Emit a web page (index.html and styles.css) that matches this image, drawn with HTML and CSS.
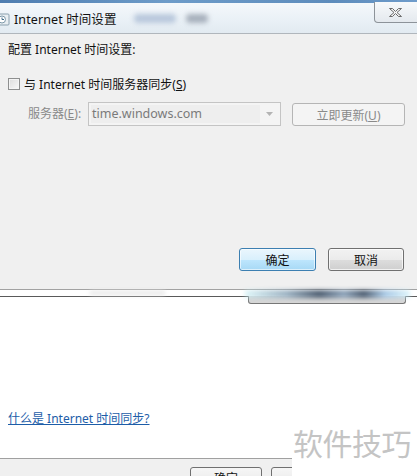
FILE: index.html
```html
<!DOCTYPE html>
<html lang="zh-CN">
<head>
<meta charset="utf-8">
<title>Internet 时间设置</title>
<link rel="stylesheet" href="styles.css">
</head>
<body>
<div class="page">
  <div class="dialog">
    <div class="frame-top"></div>
    <div class="titlebar">
      <svg class="app-icon" width="11" height="16" viewBox="0 0 11 16">
        <rect x="-4" y="3" width="13" height="11" rx="1" fill="#e8eef2" stroke="#8aa0ae"/>
        <circle cx="2" cy="8.5" r="3.5" fill="#fff" stroke="#7b97a8"/>
        <path d="M2 6.5V8.5H4" stroke="#3c6a88" fill="none"/>
      </svg>
      <span class="title">Internet 时间设置</span>
      <span class="ghost ghost-a"></span>
      <span class="ghost ghost-b"></span>
      <div class="close">
        <svg width="17" height="11" viewBox="0 0 17 11">
          <path d="M2.5 1.5h3l3 3 3-3h3l-4.5 4 4.5 4h-3l-3-3-3 3h-3l4.5-4z" fill="#f4f4f4" stroke="#6b6b6b" stroke-width="1" stroke-linejoin="round"/>
        </svg>
      </div>
    </div>
    <div class="content">
      <div class="heading">配置 Internet 时间设置:</div>
      <label class="sync-row">
        <span class="checkbox"></span>
        <span>与 Internet 时间服务器同步(<u>S</u>)</span>
      </label>
      <div class="server-row">
        <span class="server-label">服务器(<u>E</u>):</span>
        <div class="combo">
          <span class="combo-text">time.windows.com</span>
          <span class="combo-arrow">
            <svg width="7" height="4" viewBox="0 0 7 4"><path d="M0 0h7L3.5 4z" fill="#b4b4b4"/></svg>
          </span>
        </div>
        <button class="btn btn-update" type="button">立即更新(<u>U</u>)</button>
      </div>
      <div class="actions">
        <button class="btn btn-ok" type="button">确定</button>
        <button class="btn btn-cancel" type="button">取消</button>
      </div>
    </div>
  </div>
  <div class="seam">
    <div class="seam-glow"></div>
    <div class="behind-glow"></div>
    <div class="behind-tab"></div>
  </div>
  <div class="lower">
    <a class="help-link" href="#">什么是 Internet 时间同步?</a>
  </div>
  <div class="footer">
    <span class="fbtn fbtn-ok">确定</span>
    <span class="fbtn fbtn-cancel">取消</span>
  </div>
  <div class="watermark">软件技巧</div>
</div>
</body>
</html>
```

FILE: styles.css
```css
* { box-sizing: border-box; }

html, body {
  margin: 0;
  padding: 0;
  background: #ffffff;
}

body {
  font-family: "Segoe UI", "Noto Sans", "Noto Sans CJK SC", sans-serif;
  font-size: 12px;
  color: #1e1e1e;
}

.page {
  position: relative;
  width: 417px;
  height: 476px;
  overflow: hidden;
  display: flex;
  flex-direction: column;
}

.dialog {
  height: 290px;
  flex: none;
  background: #f0f0f0;
  border-bottom: 1px solid #a2a2a2;
  display: flex;
  flex-direction: column;
}

.frame-top {
  height: 3px;
  background: linear-gradient(to right, #4e7db0, #6d9cc9 40%, #5d8cbc 80%, #6f9ccb);
}

.titlebar {
  position: relative;
  height: 31px;
  display: flex;
  align-items: center;
  background: linear-gradient(to bottom, #f4f8fb, #e9f0f6 60%, #e2eaf1);
  border-bottom: 1px solid #b0b6bc;
}

.app-icon {
  flex: none;
  margin-top: 1px;
}

.title {
  margin-left: 3px;
  font-size: 12.5px;
  color: #111;
  letter-spacing: 0.1px;
}

.ghost {
  position: absolute;
  top: 11px;
  height: 9px;
  border-radius: 4px;
  filter: blur(2.5px);
}
.ghost-a { left: 134px; width: 42px; background: #b9c8dc; }
.ghost-b { left: 186px; width: 22px; background: #a7b0bc; }

.close {
  position: absolute;
  right: -4px;
  top: -1px;
  width: 47px;
  height: 21px;
  border: 1px solid #8d9399;
  border-top: none;
  border-radius: 0 0 0 4px;
  background: linear-gradient(to bottom, #f7f9fb, #e4e9ee);
  display: flex;
  align-items: center;
  justify-content: center;
  padding-right: 4px;
}

.content {
  flex: 1;
  padding: 8px 8px 0 8px;
  display: flex;
  flex-direction: column;
}

.heading {
  line-height: 16px;
  color: #111;
}

.sync-row {
  margin-top: 18px;
  height: 16px;
  display: flex;
  align-items: center;
  gap: 4px;
  color: #111;
}

.checkbox {
  width: 12px;
  height: 12px;
  border: 1px solid #8e8f8f;
  background: linear-gradient(135deg, #dcdcdc, #f8f8f8);
  box-shadow: inset 0 0 0 1px #f4f4f4;
}

.server-row {
  margin-top: 10px;
  padding-left: 20px;
  display: flex;
  align-items: flex-start;
}

.server-label {
  width: 60px;
  line-height: 24px;
  color: #8a8a8a;
}

.combo {
  width: 193px;
  height: 24px;
  border: 1px solid #c4c4c4;
  background: #f4f4f4;
  display: flex;
  align-items: center;
  padding: 2px;
}

.combo-text {
  flex: none;
  width: 169px;
  height: 100%;
  background: #eeeeee;
  color: #7a7a7a;
  font-size: 12.5px;
  line-height: 18px;
  padding-left: 1px;
}

.combo-arrow {
  flex: 1;
  display: flex;
  justify-content: center;
  align-items: center;
}

.btn {
  font-family: inherit;
  font-size: 12px;
  padding: 0;
  margin: 0;
  border-radius: 3px;
  cursor: default;
}

.btn-update {
  margin-left: 11px;
  margin-top: 1px;
  width: 113px;
  height: 23px;
  border: 1px solid #b5b5b5;
  background: #f4f4f4;
  color: #8a8a8a;
}

.actions {
  margin-top: 122px;
  padding-right: 5px;
  display: flex;
  justify-content: flex-end;
  gap: 12px;
}

.btn-ok {
  width: 77px;
  height: 23px;
  border: 1px solid #3c7fb1;
  background: linear-gradient(to bottom, #eaf6fd, #d9f0fc 50%, #bee6fd 51%, #a7d9f5);
  box-shadow: inset 0 0 0 1px rgba(255,255,255,0.6);
  color: #111;
}

.btn-cancel {
  width: 76px;
  height: 23px;
  border: 1px solid #707070;
  background: linear-gradient(to bottom, #f2f2f2, #ebebeb 50%, #dddddd 51%, #cfcfcf);
  box-shadow: inset 0 0 0 1px rgba(255,255,255,0.7);
  color: #111;
}

.seam {
  position: relative;
  height: 7px;
  flex: none;
  background: #ffffff;
  border-bottom: 1px solid #5a5a5a;
}

.seam-glow {
  position: absolute;
  left: 90px;
  top: 1px;
  width: 75px;
  height: 4px;
  background: #e6e6e6;
  filter: blur(2px);
}

.behind-tab {
  position: absolute;
  left: 248px;
  top: 6px;
  width: 158px;
  height: 8px;
  background: #d6d6d6;
  border: 1px solid #777;
  border-top: none;
  border-radius: 0 0 3px 3px;
  z-index: 1;
}

.behind-glow {
  position: absolute;
  left: 245px;
  top: 0;
  width: 165px;
  height: 8px;
  background: linear-gradient(to right, rgba(200,240,245,0.6), #9eb4c4 25%, #4f5f72 45%, #8ea4ba 60%, #4f5f72 72%, #a9c9e5 85%, rgba(200,240,250,0.6));
  filter: blur(2px);
  z-index: 2;
}

.lower {
  flex: none;
  height: 161px;
  padding: 113px 0 0 8px;
  background: #ffffff;
}

.help-link {
  line-height: 16px;
  color: #1d5da8;
  text-decoration: underline;
  font-size: 12px;
}

.footer {
  flex: 1;
  position: relative;
  background: #f0f0f0;
  border-top: 1px solid #a0a0a0;
}

.fbtn {
  position: absolute;
  top: 8px;
  height: 23px;
  border: 1px solid #707070;
  border-radius: 3px;
  background: linear-gradient(to bottom, #f6f6f6, #e6e6e6);
  text-align: center;
  line-height: 21px;
  color: #111;
}
.fbtn-ok { left: 190px; width: 72px; }
.fbtn-cancel { left: 271px; width: 72px; }

.watermark {
  position: absolute;
  left: 292px;
  top: 420px;
  width: 125px;
  height: 56px;
  background: #ffffff;
  color: #c4c4c4;
  font-family: "Noto Sans CJK SC", sans-serif;
  font-size: 30px;
  line-height: 34px;
  padding-top: 5px;
  padding-left: 1px;
  letter-spacing: -0.5px;
  z-index: 3;
}
```
